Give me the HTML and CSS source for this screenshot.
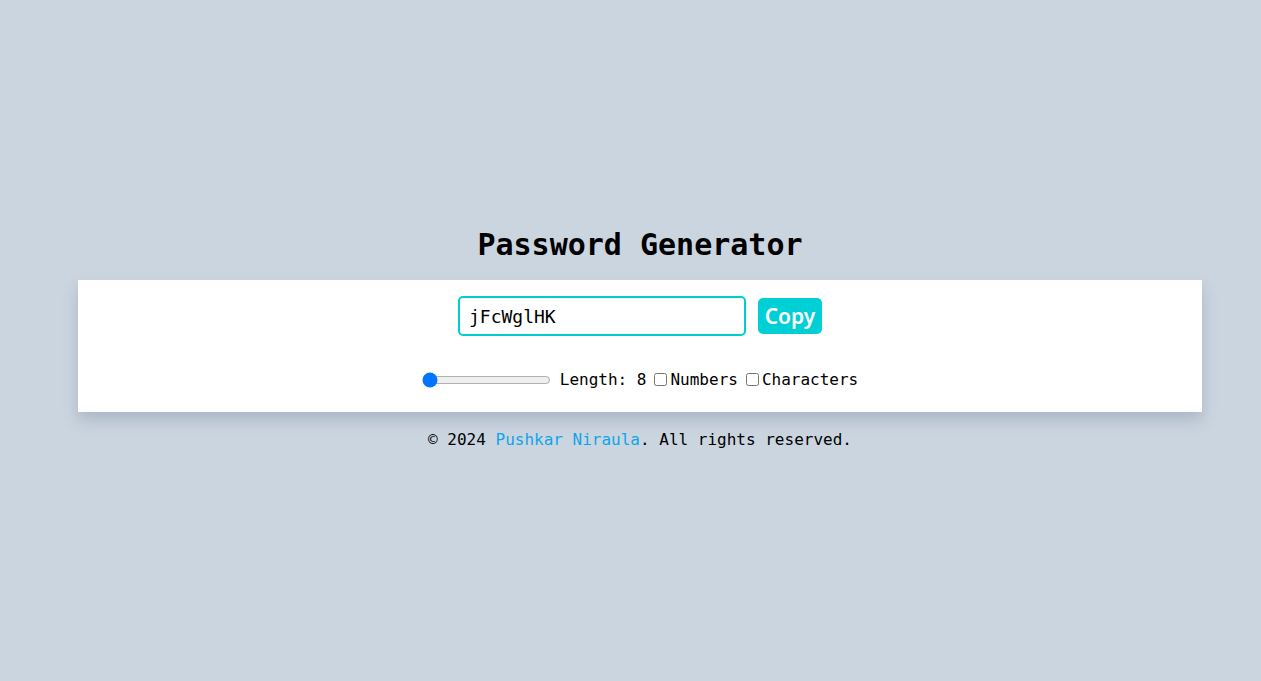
FILE: index.html
```html
<!DOCTYPE html>
<html lang="en">
<head>
<meta charset="utf-8">
<title>Password Generator</title>
<link rel="stylesheet" href="styles.css">
</head>
<body>
<main class="page">
  <h1 class="title">Password Generator</h1>
  <section class="card">
    <div class="pw-row">
      <input class="pw-input" type="text" value="jFcWglHK" readonly>
      <button class="copy-btn">Copy</button>
    </div>
    <div class="opts-row">
      <input class="range" type="range" min="8" max="100" value="8">
      <label class="opt">Length: 8</label>
      <label class="opt"><input type="checkbox" class="cb">Numbers</label>
      <label class="opt"><input type="checkbox" class="cb">Characters</label>
    </div>
  </section>
  <footer class="footer">© 2024 <a class="link" href="#">Pushkar Niraula</a>. All rights reserved.</footer>
</main>
</body>
</html>
```
FILE: styles.css
```css
html, body {
  margin: 0;
  padding: 0;
  background: #cbd5e0;
  overflow: hidden;
}
body {
  font-family: "DejaVu Sans Mono", monospace;
  color: #000;
  height: 681px;
}
.page {
  width: 1124px;
  margin-left: 78px;
  padding-top: 225px;
  display: flex;
  flex-direction: column;
}
.title {
  margin: 0;
  text-align: center;
  font-size: 30px;
  font-weight: bold;
  line-height: 40px;
  height: 55px;
}
.card {
  background: #fff;
  height: 132px;
  box-shadow: 0 8px 14px rgba(100, 116, 139, 0.3);
  display: flex;
  flex-direction: column;
  align-items: center;
}
.pw-row {
  margin-top: 16px;
  display: flex;
  align-items: center;
  gap: 12px;
}
.pw-input {
  box-sizing: border-box;
  width: 288px;
  height: 40px;
  border: 2px solid #00cdd0;
  border-radius: 5px;
  padding: 0 9px;
  font-family: "DejaVu Sans Mono", monospace;
  font-size: 18px;
  color: #000;
  outline: none;
}
.copy-btn {
  box-sizing: border-box;
  width: 64px;
  height: 36px;
  border: none;
  border-radius: 5px;
  background: #00cfd5;
  color: #fff;
  font-family: "Noto Sans", sans-serif;
  font-weight: 600;
  font-size: 21px;
  line-height: 36px;
  padding: 0;
}
.opts-row {
  margin-top: 34px;
  display: flex;
  align-items: center;
  gap: 8px;
  font-size: 16px;
}
.range {
  width: 129px;
  margin: 0 1px 0 0;
}
.opt {
  display: flex;
  align-items: center;
}
.cb {
  margin: 0 3px 0 0;
  width: 13px;
  height: 13px;
}
.footer {
  margin-top: 18px;
  text-align: center;
  font-size: 16px;
  line-height: 20px;
}
.link {
  color: #0ea5e9;
  text-decoration: none;
}
```
